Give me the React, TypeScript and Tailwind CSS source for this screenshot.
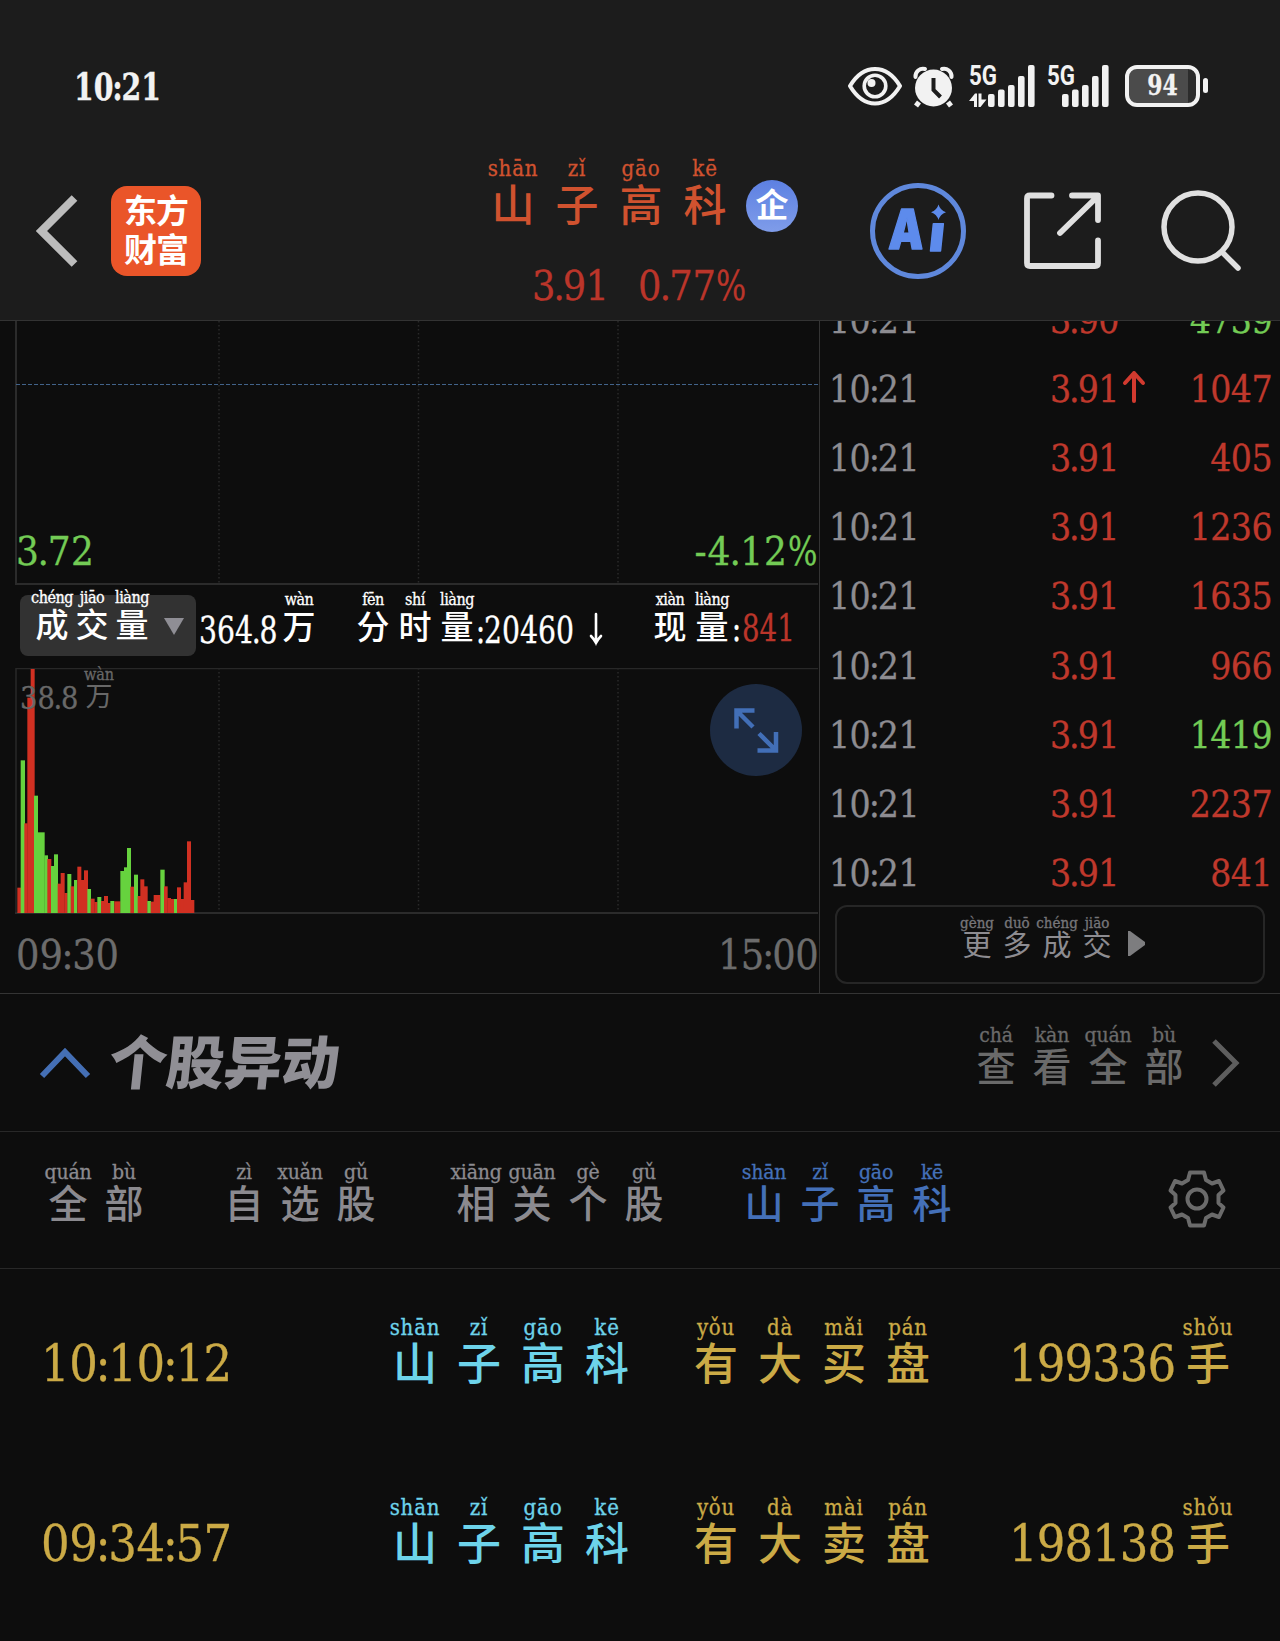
import type { ReactNode } from "react";

const SERIF = "font-['DejaVu_Serif_Condensed','DejaVu_Serif','Liberation_Serif',serif] [font-stretch:condensed] [-webkit-text-stroke:0.3px]";
const HAN = "font-['Liberation_Sans','Noto_Sans_CJK_SC',sans-serif]";

/** Serif figures with tightened punctuation and a narrow percent sign. */
function Num({ children, className = "" }: { children: string; className?: string }) {
  return (
    <span className={`${SERIF} inline-block whitespace-nowrap ${className}`}>
      {children.split(/([.:%])/).map((part, i) => {
        if (part === ".") return <span key={i} className="mx-[-0.04em]">.</span>;
        if (part === ":") return <span key={i} className="mx-[-0.04em]">:</span>;
        if (part === "%")
          return (
            <span key={i} className="inline-block w-[0.76em] origin-left scale-x-[0.86]">%</span>
          );
        return part;
      })}
    </span>
  );
}

type Pair = [string, string];

function Ruby({
  items,
  cell,
  top,
  base,
  className = "",
}: {
  items: Pair[];
  cell: string;
  top: string;
  base: string;
  className?: string;
}) {
  return (
    <div className={`flex shrink-0 ${className}`}>
      {items.map(([p, c], i) => (
        <div key={i} className={`flex shrink-0 flex-col items-center ${cell}`}>
          <span className={`${SERIF} whitespace-nowrap ${top}`}>{p}</span>
          <span className={`${HAN} whitespace-nowrap ${base}`}>{c}</span>
        </div>
      ))}
    </div>
  );
}

const NAME: Pair[] = [["shān", "山"], ["zǐ", "子"], ["gāo", "高"], ["kē", "科"]];

function Signal({ arrows }: { arrows?: boolean }) {
  const bars = [94, 89.5, 85, 76, 65];
  const x0 = arrows ? 19 : 15;
  return (
    <svg width={arrows ? 67 : 63} height="44" viewBox={`0 64 ${arrows ? 67 : 63} 44`} fill="#f2f2f2" className="shrink-0 overflow-visible">
      <text x="0" y="85" fontSize="27" fontWeight="700" fontFamily="Roboto, sans-serif" textLength="28" lengthAdjust="spacingAndGlyphs">5G</text>
      {bars.map((t, i) => (
        <rect key={i} x={x0 + i * 10} y={t} width="6.6" height={107 - t} rx="2" />
      ))}
      {arrows && <path d="M0 101 6 93.500H8V107H5V101ZM9.500 93.500H12.500V99.500H17.500L11.500 107H9.500Z" />}
    </svg>
  );
}

function StatusBar() {
  return (
    <div className="flex h-[144px] items-start pt-[64px] pl-[74px] text-[#f2f2f2]">
      <div className="w-[774px]">
        <Num className="origin-left scale-x-[0.83] text-[38px] leading-[45px] font-bold">10:21</Num>
      </div>
      <svg width="54" height="44" viewBox="0 0 54 44" fill="none" stroke="#f2f2f2" className="shrink-0">
        <path d="M2 22C8 12 17 5 27 5s19 7 25 17C46 32 37 39.500 27 39.500S8 32 2 22Z" strokeWidth="4" strokeLinejoin="round" />
        <circle cx="27" cy="22" r="10.800" strokeWidth="3.600" />
        <circle cx="23.500" cy="19" r="4" fill="#f2f2f2" stroke="none" />
      </svg>
      <svg width="44" height="44" viewBox="0 0 44 44" className="ml-[10px] shrink-0" fill="#f2f2f2">
        <circle cx="21.500" cy="24" r="18.500" />
        <path d="M3.500 13C3 8 8 3.500 13 5M30 5c5-1.500 10 3 9.500 8" fill="none" stroke="#f2f2f2" strokeWidth="4" strokeLinecap="round" />
        <path d="m7 38-3 4M36 38l3 4" stroke="#f2f2f2" strokeWidth="5" />
        <path d="M21.500 14v12l7 7" fill="none" stroke="#1c1c1c" strokeWidth="4" />
      </svg>
      <div className="ml-[13px] flex">
        <Signal arrows />
      </div>
      <div className="ml-[11px] flex">
        <Signal />
      </div>
      <div className="mt-[1px] ml-[15px] flex h-[42px] w-[75px] items-center justify-center rounded-[12px] border-[4px] border-[#f2f2f2] bg-[linear-gradient(90deg,#4b4b4b_88%,#2c2c2c_88%)]">
        <Num className="scale-x-[0.87] text-[28px] leading-[34px] font-bold">94</Num>
      </div>
      <div className="mt-[14px] ml-[3px] h-[15px] w-[5px] rounded-[3px] bg-[#f2f2f2]" />
    </div>
  );
}

function Header() {
  return (
    <div className="flex h-[176px] items-center pb-[2px] pl-[36px]">
      <svg width="42" height="74" viewBox="0 0 42 74" fill="none" className="shrink-0">
        <path d="M38.500 4 5.500 37l33 33" stroke="#bcbcbc" strokeWidth="8" strokeLinejoin="miter" />
      </svg>
      <div className={`${HAN} ml-[33px] flex h-[90px] w-[90px] shrink-0 flex-col items-center justify-center rounded-[16px] bg-[#ea5529] text-[33px] leading-[39px] font-bold tracking-[-1px] text-white`}>
        <span>东方</span>
        <span>财富</span>
      </div>
      <div className="ml-[280px] h-[148px] w-[318px] shrink-0">
        <div className="flex h-[68px] items-start text-[#d0522f]">
          <Ruby items={NAME} cell="w-[64px]" top="text-[22px] leading-[24px] tracking-[0.8px]" base="text-[43px] leading-[50px] font-medium" />
          <div className={`${HAN} mt-[23px] ml-[9px] flex size-[52px] items-center justify-center rounded-full bg-linear-to-b from-[#5d80e2] to-[#7f9ce9] text-[33px] leading-[52px] font-bold text-white`}>
            企
          </div>
        </div>
        <div className="mt-[42px] flex h-[38px] gap-[33px] pl-[51px] text-[41px] leading-[39px] text-[#bb352a]">
          <Num className="w-[73px] tracking-[-0.6px]">3.91</Num>
          <Num className="tracking-[-0.3px]">0.77%</Num>
        </div>
      </div>
      <svg width="98" height="98" viewBox="0 0 98 98" className="ml-[70px] shrink-0 overflow-visible" fill="#5d8bec">
        <circle cx="49" cy="49" r="45.500" fill="none" stroke="#5f88dc" strokeWidth="5" />
        <g fontFamily="Inter, sans-serif" fontWeight="900" stroke="#5d8bec" strokeWidth="1.500" strokeLinejoin="round">
          <text x="0" y="0" fontSize="55" textLength="35" lengthAdjust="spacingAndGlyphs" transform="translate(19 66.500) skewX(-3)">A</text>
          <text x="0" y="0" fontSize="50" textLength="15" lengthAdjust="spacingAndGlyphs" transform="translate(59 69) skewX(-6)">ı</text>
        </g>
        <path d="M69.500 22.500q1.500 5.500 7.500 7.700-6 2.300-7.500 7.800-1.500-5.500-7.500-7.800 6-2.200 7.500-7.700Z" />
      </svg>
      <svg width="82" height="82" viewBox="0 0 82 82" className="ml-[55px] shrink-0" fill="none" stroke="#e0e0e0" strokeWidth="5.800" strokeLinecap="round" strokeLinejoin="round">
        <path d="M29.500 5.500H8q-3 0-3 3V73q0 3 3 3H73q3 0 3-3V50.500" />
        <path d="M50 5.500H76V30M75 7 38 43" />
      </svg>
      <svg width="84" height="84" viewBox="0 0 84 84" className="ml-[56px] shrink-0" fill="none" stroke="#e0e0e0" strokeWidth="5.500" strokeLinecap="round">
        <circle cx="38" cy="38" r="34" />
        <path d="M62 63 78 79" />
      </svg>
    </div>
  );
}

// [x, width, height, isUp] in chart units, three per pixel
const BARS: [number, number, number, 0 | 1][] = [
  [52, 11, 76, 1], [62, 13, 458, 0], [73, 10, 269, 1], [82, 12, 646, 1], [92, 12, 732, 1], [102, 12, 352, 0],
  [113, 21, 242, 0], [133, 11, 173, 0], [142, 12, 162, 1], [153, 10, 141, 0], [162, 12, 176, 0], [173, 10, 88, 1],
  [182, 12, 120, 1], [193, 10, 60, 1], [202, 12, 117, 0], [212, 10, 80, 1], [222, 10, 99, 0], [232, 12, 139, 1],
  [243, 10, 99, 1], [252, 12, 128, 1], [262, 11, 72, 0], [272, 12, 43, 1], [283, 10, 33, 1], [292, 12, 48, 0],
  [303, 10, 36, 1], [312, 12, 51, 1], [323, 9, 30, 1], [331, 12, 36, 0], [343, 19, 35, 1], [361, 12, 126, 0],
  [372, 10, 137, 0], [381, 12, 195, 0], [391, 12, 79, 1], [402, 12, 115, 0], [413, 10, 51, 1], [421, 12, 101, 1],
  [432, 11, 80, 1], [442, 11, 36, 0], [452, 10, 34, 1], [461, 20, 54, 1], [481, 13, 130, 0], [492, 11, 80, 1],
  [502, 11, 45, 1], [512, 11, 42, 1], [522, 10, 42, 0], [531, 12, 77, 1], [542, 10, 42, 1], [551, 11, 92, 1],
  [561, 12, 215, 1], [572, 11, 39, 1],
];

function GridLines({ h }: { h: number }) {
  return (
    <g stroke="#2a2a2a" strokeWidth="1.500" strokeDasharray="1.500 2.500">
      {[204, 403.5, 603].map((x) => (
        <line key={x} x1={x} x2={x} y1="0" y2={h} />
      ))}
    </g>
  );
}

const CHIP_CELL = { cell: "w-[40px]", top: "text-[16px] leading-[20px] tracking-[-0.5px]", base: "text-[33px] leading-[35px] font-medium" };

function Chart() {
  return (
    <div className="h-[673px] w-[820px] shrink-0 border-r border-[#343434] pl-[15px]">
      <div className="relative h-[265px] w-[803px]">
        <svg width="803" height="265" viewBox="0 0 803 265" className="absolute inset-0">
          <GridLines h={263} />
          <path d="M1 0V263H803" fill="none" stroke="#2b2b2b" strokeWidth="2" />
          <path d="M1 63.500H803" stroke="#42638a" strokeWidth="1.200" strokeDasharray="4 2" />
        </svg>
        <div className="relative flex justify-between pt-[211px] text-[40px] leading-[38px] text-[#73cb55]">
          <Num className="pl-[1px] tracking-[0.3px]">3.72</Num>
          <Num className="tracking-[0.8px]">-4.12%</Num>
        </div>
      </div>
      <div className="flex h-[82px] items-start pl-[5px] text-white">
        <div className="mt-[9px] flex h-[61px] w-[176px] shrink-0 rounded-[8px] bg-[#323232] pl-[12px]">
          <Ruby items={[["chéng", "成"], ["jiāo", "交"], ["liàng", "量"]]} className="-mt-[7px]" {...CHIP_CELL} />
          <svg width="20" height="17" viewBox="0 0 20 17" className="mt-[23px] ml-[12px]">
            <path d="M0 0H20L10 17Z" fill="#8f8e95" />
          </svg>
        </div>
        <div className="mt-[25px] ml-[3px] w-[80px] text-[37px] leading-[36px]">
          <Num className="origin-left scale-x-[0.85]">364.8</Num>
        </div>
        <Ruby items={[["wàn", "万"]]} {...CHIP_CELL} className="mt-[4px]" />
        <Ruby items={[["fēn", "分"], ["shí", "时"], ["liàng", "量"]]} cell="w-[42px]" top={CHIP_CELL.top} base={CHIP_CELL.base} className="mt-[4px] ml-[33px]" />
        <div className="mt-[25px] ml-[-1px] w-[104px] text-[37px] leading-[36px]">
          <Num className="origin-left scale-x-[0.85]">:20460</Num>
        </div>
        <svg width="16" height="34" viewBox="0 0 16 34" className="mt-[26px] ml-[7px] shrink-0" fill="none" stroke="#fff" strokeWidth="2.600" strokeLinecap="round">
          <path d="M8 2V31M3 24q3 3 5 7 2-4 5-7" />
        </svg>
        <Ruby items={[["xiàn", "现"], ["liàng", "量"]]} cell="w-[42px]" top={CHIP_CELL.top} base={CHIP_CELL.base} className="mt-[4px] ml-[45px]" />
        <div className="mt-[25px] flex text-[37px] leading-[36px]">
          <Num className="w-[9px] origin-left scale-x-[0.85]">:</Num>
          <Num className="origin-left scale-x-[0.83] text-[#bb352a]">841</Num>
        </div>
      </div>
      <div className="relative h-[246px] w-[803px]">
        <svg width="803" height="246" viewBox="0 0 803 246" className="absolute inset-0">
          <GridLines h={245} />
          <path d="M1 245V.5H803" fill="none" stroke="#282828" strokeWidth="1.500" />
          <path d="M0 245H803" stroke="#2b2b2b" strokeWidth="2" />
          {BARS.map(([x, w, h, up], i) => (
            <rect key={i} x={x / 3 - 15} y={245 - h / 3} width={w / 3} height={h / 3} fill={up ? "#d13022" : "#66d23e"} />
          ))}
        </svg>
        <div className="relative flex justify-between text-[#686868]">
          <div className="flex pl-[5px]">
            <div className="mt-[14px] w-[61px] text-[32px] leading-[30px]">
              <Num className="origin-left scale-x-[0.95]">38.8</Num>
            </div>
            <Ruby items={[["wàn", "万"]]} cell="w-[36px]" top="text-[16px] leading-[14px]" base="text-[27px] leading-[30px]" />
          </div>
          <div className="mt-[16px] mr-[16px] flex size-[92px] items-center justify-center rounded-full bg-[#1d2b42]">
            <svg width="46" height="46" viewBox="0 0 46 46" fill="none" stroke="#426fb7" strokeWidth="4.500">
              <path d="M21.500 3.500H3.500V21.500M3.500 3.500 20 20M26 26.500 43 43.500M43 25V43.500H24.500" />
            </svg>
          </div>
        </div>
      </div>
      <div className="flex w-[803px] justify-between pt-[22px] text-[41px] leading-[38px] text-[#6c6c6c]">
        <Num className="pl-[1px]">09:30</Num>
        <Num className="tracking-[-0.6px]">15:00</Num>
      </div>
    </div>
  );
}

const TICKS: [string, string, boolean][] = [
  ["3.90", "4739", false],
  ["3.91", "1047", true],
  ["3.91", "405", true],
  ["3.91", "1236", true],
  ["3.91", "1635", true],
  ["3.91", "966", true],
  ["3.91", "1419", false],
  ["3.91", "2237", true],
  ["3.91", "841", true],
];

function Trades() {
  return (
    <div className="flex h-[673px] flex-1 flex-col overflow-hidden">
      <div className="-mt-[35px] h-[619px] shrink-0">
        {TICKS.map(([price, vol, up], i) => (
          <div key={i} className="flex h-[69.200px] items-center pr-[8px] pl-[9px] text-[37px] leading-[40px] tracking-[-0.6px]">
            <Num className="w-[221px] text-[#8d8c91]">10:21</Num>
            <Num className="w-[70px] text-[#bf382c]">{price}</Num>
            <div className="flex w-[28px] justify-center">
              {i === 1 && (
                <svg width="24" height="34" viewBox="0 0 24 34" className="-mt-[6px]" fill="none" stroke="#d23a2f" strokeWidth="4" strokeLinecap="round" strokeLinejoin="round">
                  <path d="M12 31V3M3 13 12 3l9 10" />
                </svg>
              )}
            </div>
            <Num className={`flex-1 text-right ${up ? "text-[#bf382c]" : "text-[#73cb55]"}`}>{vol}</Num>
          </div>
        ))}
      </div>
      <div className="mx-[15px] flex h-[79px] shrink-0 items-start rounded-[12px] border-2 border-[#262626] pt-[7px] pl-[120px] text-[#8d8c91]">
        <Ruby items={[["gèng", "更"], ["duō", "多"], ["chéng", "成"], ["jiāo", "交"]]} cell="w-[40px]" top="text-[15px] leading-[18px] text-[#77767a]" base="text-[29px] leading-[28px]" />
        <svg width="17" height="25" viewBox="0 0 17 25" className="mt-[17px] ml-[11px]">
          <path d="M0 0h2L17 11v3L2 25H0Z" fill="#7d7d7f" />
        </svg>
      </div>
    </div>
  );
}

const TAB = { cell: "w-[56px]", top: "text-[21px] leading-[24px] tracking-[-0.2px]", base: "text-[39px] leading-[41px] font-medium" };

const EVENTS: { time: string; action: Pair[]; lots: string; cls: string }[] = [
  { time: "10:10:12", action: [["yǒu", "有"], ["dà", "大"], ["mǎi", "买"], ["pán", "盘"]], lots: "199336", cls: "h-[180px]" },
  { time: "09:34:57", action: [["yǒu", "有"], ["dà", "大"], ["mài", "卖"], ["pán", "盘"]], lots: "198138", cls: "h-[140px]" },
];

const ROW = { cell: "w-[64px]", top: "text-[22px] leading-[28px] tracking-[0.8px]", base: "text-[44px] leading-[46px] font-medium" };

function Frame({ children }: { children: ReactNode }) {
  return <div className="h-[1641px] w-[1280px] overflow-hidden bg-[#0d0d0d]">{children}</div>;
}

export default function App() {
  return (
    <Frame>
      <div className="h-[321px] border-b border-[#333] bg-[#1c1c1c]">
        <StatusBar />
        <Header />
      </div>
      <div className="flex h-[673px] border-b border-[#343434]">
        <Chart />
        <Trades />
      </div>

      <div className="flex h-[138px] items-start border-b border-[#282828] pl-[39px]">
        <svg width="52" height="34" viewBox="0 0 52 34" className="mt-[52px] shrink-0" fill="none">
          <path d="M3 30 26 6l23 24" stroke="#446fb5" strokeWidth="6" />
        </svg>
        <div className={`${HAN} mt-[39px] ml-[18px] w-[859px] -skew-x-6 text-[58px] leading-[62px] font-black tracking-[-0.5px] text-[#908f95]`}>
          个股异动
        </div>
        <Ruby items={[["chá", "查"], ["kàn", "看"], ["quán", "全"], ["bù", "部"]]} {...TAB} className="mt-[29px] text-[#6a6a6a]" />
        <svg width="32" height="50" viewBox="0 0 32 50" className="mt-[44px] ml-[18px] shrink-0" fill="none">
          <path d="M4 3 26 25 4 47" stroke="#5e5e5e" strokeWidth="5" />
        </svg>
      </div>

      <div className="flex h-[137px] items-start border-b border-[#282828] pt-[28px] pl-[40px] text-[#8b8a8f]">
        <Ruby items={[["quán", "全"], ["bù", "部"]]} {...TAB} />
        <Ruby items={[["zì", "自"], ["xuǎn", "选"], ["gǔ", "股"]]} {...TAB} className="ml-[64px]" />
        <Ruby items={[["xiāng", "相"], ["guān", "关"], ["gè", "个"], ["gǔ", "股"]]} {...TAB} className="ml-[64px]" />
        <Ruby items={NAME} {...TAB} className="ml-[64px] text-[#4470b8]" />
        <svg width="58" height="58" viewBox="-29 -29 58 58" className="mt-[10px] ml-[208px] shrink-0" fill="none" stroke="#6b6b6b" strokeWidth="4" strokeLinejoin="round">
          <path d="M-7-26.500H7L9-19 15-15.500 22-18 26.500-8.500 21.500-4V4L26.500 8.500 22 18 15 15.500 9 19 7 26.500H-7L-9 19-15 15.500-22 18-26.500 8.500-21.500 4V-4L-26.500-8.500-22-18-15-15.500-9-19Z" />
          <circle r="9.500" />
        </svg>
      </div>

      <div className="pt-[45px] text-[#cbaa46]">
        {EVENTS.map((e) => (
          <div key={e.time} className={`flex items-start pl-[41px] ${e.cls}`}>
            <Num className="mt-[27px] w-[342px] text-[50px] leading-[47px] tracking-[-0.4px]">{e.time}</Num>
            <Ruby items={NAME} {...ROW} className="text-[#6dd3ea]" />
            <Ruby items={e.action} {...ROW} className="ml-[45px]" />
            <Num className="mt-[27px] ml-[69px] w-[167px] text-[50px] leading-[47px] tracking-[-0.9px]">{e.lots}</Num>
            <Ruby items={[["shǒu", "手"]]} {...ROW} />
          </div>
        ))}
      </div>
    </Frame>
  );
}
